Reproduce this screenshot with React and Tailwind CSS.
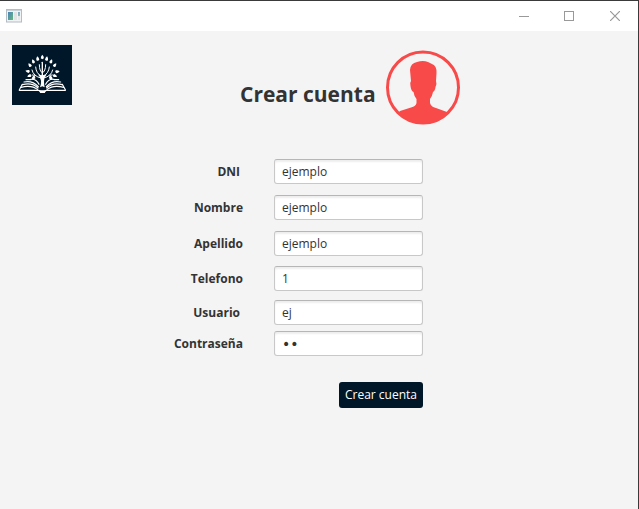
import React from "react";

const fields = [
  { id: "dni", label: "DNI", value: "ejemplo", type: "text", row: "mb-[11px]", pad: "pr-[3px]", font: "text-xs" },
  { id: "nombre", label: "Nombre", value: "ejemplo", type: "text", row: "mb-[11px]", pad: "", font: "text-xs" },
  { id: "apellido", label: "Apellido", value: "ejemplo", type: "text", row: "mb-[10px]", pad: "", font: "text-xs" },
  { id: "telefono", label: "Telefono", value: "1", type: "text", row: "mb-[9px]", pad: "", font: "text-xs" },
  { id: "usuario", label: "Usuario", value: "ej", type: "text", row: "mb-[6px]", pad: "pr-[3px]", font: "text-xs" },
  { id: "contrasena", label: "Contraseña", value: "ej", type: "password", row: "mb-[26px]", pad: "", font: "font-['DejaVu_Sans',sans-serif] text-sm" },
];

// Leaves of the tree: centre x, centre y, rotation
const leaves = [
  [91, 37, 0], [77, 42, -10], [104, 42, 10], [64, 50, -20], [117, 50, 20],
  [54, 61, -35], [128, 61, 35], [48, 79, -80], [135, 80, 80],
  [53, 92, -110], [128, 92, 110], [65, 98, -130], [116, 98, 130],
];

function Logo() {
  return (
    <svg className="size-[60px] shrink-0" viewBox="0 0 180 180" role="img" aria-label="Logo">
      <rect width="180" height="180" fill="#001729" />
      <g fill="#fff">
        {leaves.map(([x, y, r]) => (
          <path key={`${x}-${y}`} d="M0 -8 Q5 -3 4.500 3 Q0 8 -4.500 3 Q-5 -3 0 -8Z" transform={`translate(${x} ${y}) rotate(${r})`} />
        ))}
        <path d="M78 88 Q91 94 104 88 Q96 98 96 109 Q96 119 98 127 L91 124 L84 127 Q88 117 87 107 Q86 97 78 88Z" />
      </g>
      <g fill="none" stroke="#fff" strokeWidth="3" strokeLinecap="round">
        <path strokeWidth="4" d="M91 98V52" />
        <path d="M91 84Q82 79 82 59M91 84Q101 79 101 59M88 93Q72 86 71 66M94 93Q110 86 112 66M87 99Q64 94 60 75M95 99Q118 94 122 75M69 91L61 90M113 91L121 90" />
        <path strokeWidth="3.5" d="M42 104H56M36 111Q61 105 79 125M31 119Q60 111 78 129M27 127Q59 119 77 134M140 104H127M146 111Q121 105 103 125M151 119Q122 111 104 129M155 127Q123 119 105 134" />
        <path strokeWidth="3.5" d="M56 103Q73 101 81 118M126 103Q109 101 101 118M31 118L22 134M151 118L160 134" />
        <path d="M22 136H79Q84 136 86 141H97Q99 136 104 136H160" strokeWidth="4" />
      </g>
      <path d="M80 136H103L98 144H85Z" fill="#fff" />
    </svg>
  );
}

function Avatar() {
  return (
    <svg className="size-[75px] shrink-0" viewBox="0 0 75 75" aria-hidden="true">
      <circle cx="37" cy="37.5" r="35.5" fill="none" stroke="#f94a4a" strokeWidth="3" />
      <path fill="#f94a4a" d="M25 31 L24 20 Q24.500 13 31 12 Q37 10 42 12 L46 14 Q51 16 50.500 23 L50 31 Q51 33 49.500 37 Q49 41 47 42 Q46 47 44 49 V53 Q45 57 50 58 L61 62 L63 63 Q53 74 37 74 Q22 74 12 63 L14 61 L25 57.500 Q30 56 30.500 53 V49 Q28 46 27.500 42 Q25 41 24.500 36 Q23.500 33 25 31Z" />
    </svg>
  );
}

function TitleBar() {
  return (
    <header className="flex h-[30px] items-center bg-white pl-1.5">
      <svg className="h-3.5 w-4" viewBox="0 0 16 14" aria-hidden="true">
        <defs>
          <linearGradient id="pane" x1="0" y1="0" x2="1" y2="1">
            <stop offset="0" stopColor="#4b83b8" />
            <stop offset="1" stopColor="#65b77c" />
          </linearGradient>
        </defs>
        <rect x="0.5" y="0.5" width="15" height="12.500" fill="#f1f2f3" stroke="#b4bcc4" />
        <path d="M1 1.500H15" stroke="#c9d0d6" />
        <rect x="2" y="3" width="5" height="8" fill="url(#pane)" />
        <rect x="8" y="3" width="3" height="8" fill="#e1e3e4" />
        <rect x="12" y="3" width="2" height="4" fill="url(#pane)" opacity="0.7" />
        <rect x="12" y="7" width="2" height="4" fill="#e4e6e7" />
      </svg>
      <div className="ml-auto flex h-full">
        <button type="button" aria-label="Minimizar" className="flex w-[45px] items-center justify-center">
          <svg className="size-[10px]" viewBox="0 0 10 10"><path d="M0 5.500H10" stroke="#999" /></svg>
        </button>
        <button type="button" aria-label="Maximizar" className="flex w-[46px] items-center justify-center">
          <svg className="size-[10px]" viewBox="0 0 10 10"><rect x="0.5" y="0.5" width="9" height="9" fill="none" stroke="#999" /></svg>
        </button>
        <button type="button" aria-label="Cerrar" className="flex w-[46px] items-center justify-center">
          <svg className="size-[10px]" viewBox="0 0 10 10"><path d="M0 0L10 10M10 0L0 10" stroke="#999" strokeWidth="1.2" /></svg>
        </button>
      </div>
    </header>
  );
}

export default function App() {
  return (
    <div className="flex min-h-screen flex-col border-t border-r border-[#3a3a3a] bg-[#f4f4f4] font-['Open_Sans','Noto_Sans',sans-serif] text-xs text-[#333]">
      <TitleBar />
      <main className="flex-1 pt-[14px]">
        <div className="flex items-start pl-3">
          <Logo />
          <h1 className="mt-[31px] ml-[168px] w-[146px] text-[21px] leading-9 font-bold whitespace-nowrap">Crear cuenta</h1>
          <div className="mt-[5px]">
            <Avatar />
          </div>
        </div>
        <form className="mt-[34px] ml-[163px] w-[260px]" onSubmit={(e) => e.preventDefault()}>
          {fields.map((f) => (
            <div key={f.id} className={`flex items-center ${f.row}`}>
              <label htmlFor={f.id} className={`w-20 text-right leading-6 font-bold ${f.pad}`}>{f.label}</label>
              <input
                id={f.id}
                type={f.type}
                defaultValue={f.value}
                className={`ml-[31px] h-[25px] w-[149px] rounded-[3px] border border-[#c8c8c8] border-t-[#b6b6b6] bg-white px-[7px] shadow-[inset_0_2px_2px_#eeeeee] outline-none ${f.font}`}
              />
            </div>
          ))}
          <div className="flex justify-end">
            <button type="submit" className="h-[26px] w-[84px] rounded-[3px] bg-[#001729] text-center text-white">Crear cuenta</button>
          </div>
        </form>
      </main>
    </div>
  );
}
